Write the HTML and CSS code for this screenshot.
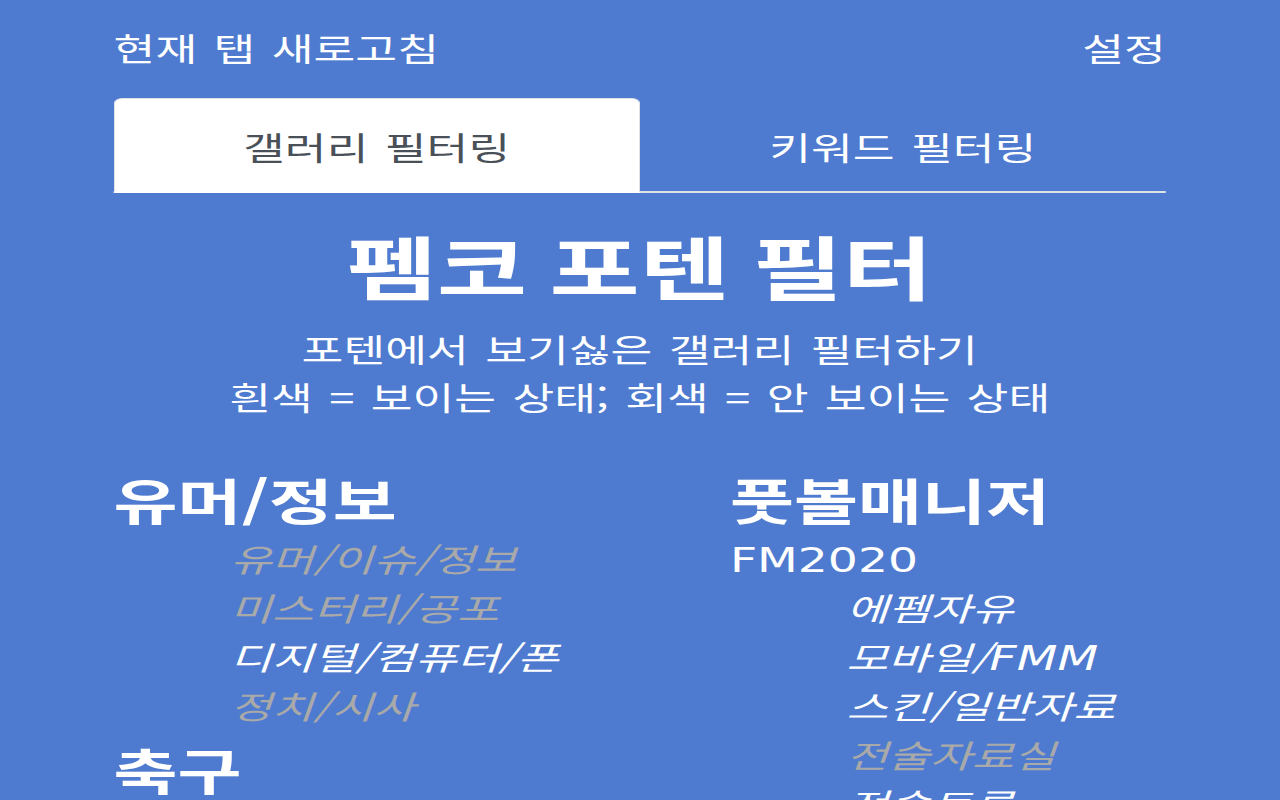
FILE: index.html
```html
<!DOCTYPE html>
<html lang="ko">
  <head>
    <meta charset="utf-8">
    <title>펨코 포텐 필터</title>
    <link rel="stylesheet" href="styles.css">
  </head>
  <body>
    <div class="popup">
      <div class="topbar">
        <span class="link">현재 탭 새로고침</span>
        <span class="link">설정</span>
      </div>

      <div class="tabs">
        <div class="tab active">갤러리 필터링</div>
        <div class="tab">키워드 필터링</div>
      </div>

      <h1 class="title">펨코 포텐 필터</h1>
      <p class="desc">포텐에서 보기싫은 갤러리 필터하기<br>흰색 = 보이는 상태; 회색 = 안 보이는 상태</p>

      <div class="columns">
        <div class="col">
          <div class="group">
            <h2 class="group-name">유머/정보</h2>
            <div class="item off">유머/이슈/정보</div>
            <div class="item off">미스터리/공포</div>
            <div class="item">디지털/컴퓨터/폰</div>
            <div class="item off">정치/시사</div>
          </div>
          <div class="group">
            <h2 class="group-name">축구</h2>
            <div class="item">해외축구</div>
            <div class="item">국내축구</div>
            <div class="item">축구뉴스</div>
          </div>
        </div>

        <div class="col">
          <div class="group">
            <h2 class="group-name">풋볼매니저</h2>
            <div class="sub-name"><span class="latin">FM2020</span></div>
            <div class="item">에펨자유</div>
            <div class="item">모바일/<span class="latin">FMM</span></div>
            <div class="item">스킨/일반자료</div>
            <div class="item off">전술자료실</div>
            <div class="item">전술토론</div>
          </div>
        </div>
      </div>
    </div>
  </body>
</html>
```

FILE: styles.css
```css
html,
body {
  margin: 0;
  height: 100%;
  overflow: hidden;
}
body {
  background-color: #4e7bcf;
  color: #fff;
  font-family: "Noto Sans CJK KR", sans-serif;
  font-size: 32px;
  word-spacing: 0.08em;
}

/* the popup is drawn wide: everything is stretched sideways */
.popup {
  width: 901px;
  box-sizing: border-box;
  padding: 23px 80px 0;
  transform: scaleX(1.42);
  transform-origin: 0 0;
}

.topbar {
  display: flex;
  justify-content: space-between;
  line-height: 48px;
}
.link {
  cursor: pointer;
}

.tabs {
  display: flex;
  margin-top: 27px;
  border-bottom: 2px solid #dee2e6;
}
.tab {
  flex: 1;
  height: 95px;
  box-sizing: border-box;
  margin-bottom: -2px;
  display: flex;
  align-items: center;
  justify-content: center;
  border: 1px solid transparent;
  border-radius: 6px 6px 0 0;
  cursor: pointer;
}
.tab.active {
  background-color: #fff;
  color: #495057;
  border-color: #dee2e6 #dee2e6 #fff;
}

.title {
  margin: 28px 0 0;
  text-align: center;
  font-size: 69px;
  line-height: 88px;
  font-weight: bold;
  word-spacing: -0.05em;
}
.desc {
  margin: 15px 0 0;
  text-align: center;
  line-height: 48px;
}

.columns {
  display: grid;
  grid-template-columns: 434px 1fr;
  margin-top: 49px;
}
.group {
  margin-bottom: 9px;
}
.group-name {
  margin: 0 0 5px;
  font-size: 49px;
  line-height: 60px;
  font-weight: bold;
  word-spacing: 0;
}
.sub-name {
  line-height: 49px;
}
.item {
  padding-left: 82px;
  line-height: 49px;
  font-style: italic;
  cursor: pointer;
}
.item.off {
  color: #a9a9a9;
}
.latin {
  font-family: "DejaVu Sans", sans-serif;
  font-size: 1.04em;
  line-height: 1;
}
```
